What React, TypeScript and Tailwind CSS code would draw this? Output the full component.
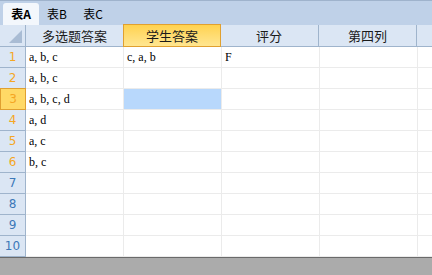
import React from "react";

const cols = ["多选题答案", "学生答案", "评分", "第四列"];

const rows: string[][] = [
  ["a, b, c", "c, a, b", "F", ""],
  ["a, b, c", "", "", ""],
  ["a, b, c, d", "", "", ""],
  ["a, d", "", "", ""],
  ["a, c", "", "", ""],
  ["b, c", "", "", ""],
  ["", "", "", ""],
  ["", "", "", ""],
  ["", "", "", ""],
  ["", "", "", ""],
];

const cjk = { fontFamily: '"Noto Sans CJK SC", "Noto Sans", sans-serif' };
const cell = { fontFamily: '"Liberation Serif", "Noto Sans CJK SC", serif' };

export default function App() {
  return (
    <div className="w-[432px] h-[275px] overflow-hidden bg-[#ababab] flex flex-col">
      {/* 工作表标签栏 */}
      <div className="h-[25px] shrink-0 border-t border-[#9fb3cc] bg-[#bfd1e8] flex items-end pl-[3px] text-[12px] text-black" style={cjk}>
        <div className="h-[22px] w-[36px] rounded-t-[3px] bg-[#f3f7fc] flex items-center justify-center font-bold">表A</div>
        <div className="h-[22px] w-[36px] flex items-center justify-center">表B</div>
        <div className="h-[22px] w-[36px] flex items-center justify-center">表C</div>
      </div>

      {/* 表格 */}
      <div className="bg-white">
        {/* 列头 */}
        <div className="flex h-[22px] border-b border-[#9fb4cc] bg-[#dbe6f4] text-[13px] text-[#1a1a1a]" style={cjk}>
          <div className="w-[26px] shrink-0 border-r border-[#9fb4cc] relative">
            <div className="absolute right-[3px] bottom-[3px] w-0 h-0 border-l-[13px] border-l-transparent border-b-[13px] border-b-[#a9bcd4]" />
          </div>
          {cols.map((c, i) =>
            i === 1 ? (
              <div key={c} className="w-[98px] shrink-0 border border-[#e0a030] -mt-px -ml-px bg-gradient-to-b from-[#ffd24d] to-[#ffe690] flex items-center justify-center h-[23px]">
                {c}
              </div>
            ) : (
              <div key={c} className={`w-[98px] shrink-0 border-r border-[#9fb4cc] flex items-center justify-center ${i === 2 ? "-ml-px w-[99px]" : ""}`}>
                {c}
              </div>
            )
          )}
          <div className="flex-1" />
        </div>

        {/* 数据行 */}
        {rows.map((r, ri) => {
          const n = ri + 1;
          const sel = n === 3;
          return (
            <div key={n} className="flex h-[21px]">
              <div
                className={`w-[26px] shrink-0 flex items-center justify-center text-[12px] ${
                  sel
                    ? "bg-[#ffd966] border border-[#e0a030] -mt-px h-[22px]"
                    : "bg-[#dbe6f4] border-r border-b border-[#9fb4cc]"
                } ${n <= 6 ? "text-[#f5a623]" : "text-[#3c78b8]"}`}
                style={{ fontFamily: '"DejaVu Sans", sans-serif' }}
              >
                {n}
              </div>
              {r.map((v, ci) => (
                <div
                  key={ci}
                  className={`w-[98px] shrink-0 border-r border-b border-[#ebebeb] flex items-center pl-[3px] text-[12px] text-black ${
                    sel && ci === 1 ? "bg-[#b8d8fc]" : ""
                  }`}
                  style={cell}
                >
                  {v}
                </div>
              ))}
              <div className="flex-1 border-b border-[#ebebeb]" />
            </div>
          );
        })}
      </div>
      <div className="h-px bg-[#6a6a6a]" />
    </div>
  );
}
